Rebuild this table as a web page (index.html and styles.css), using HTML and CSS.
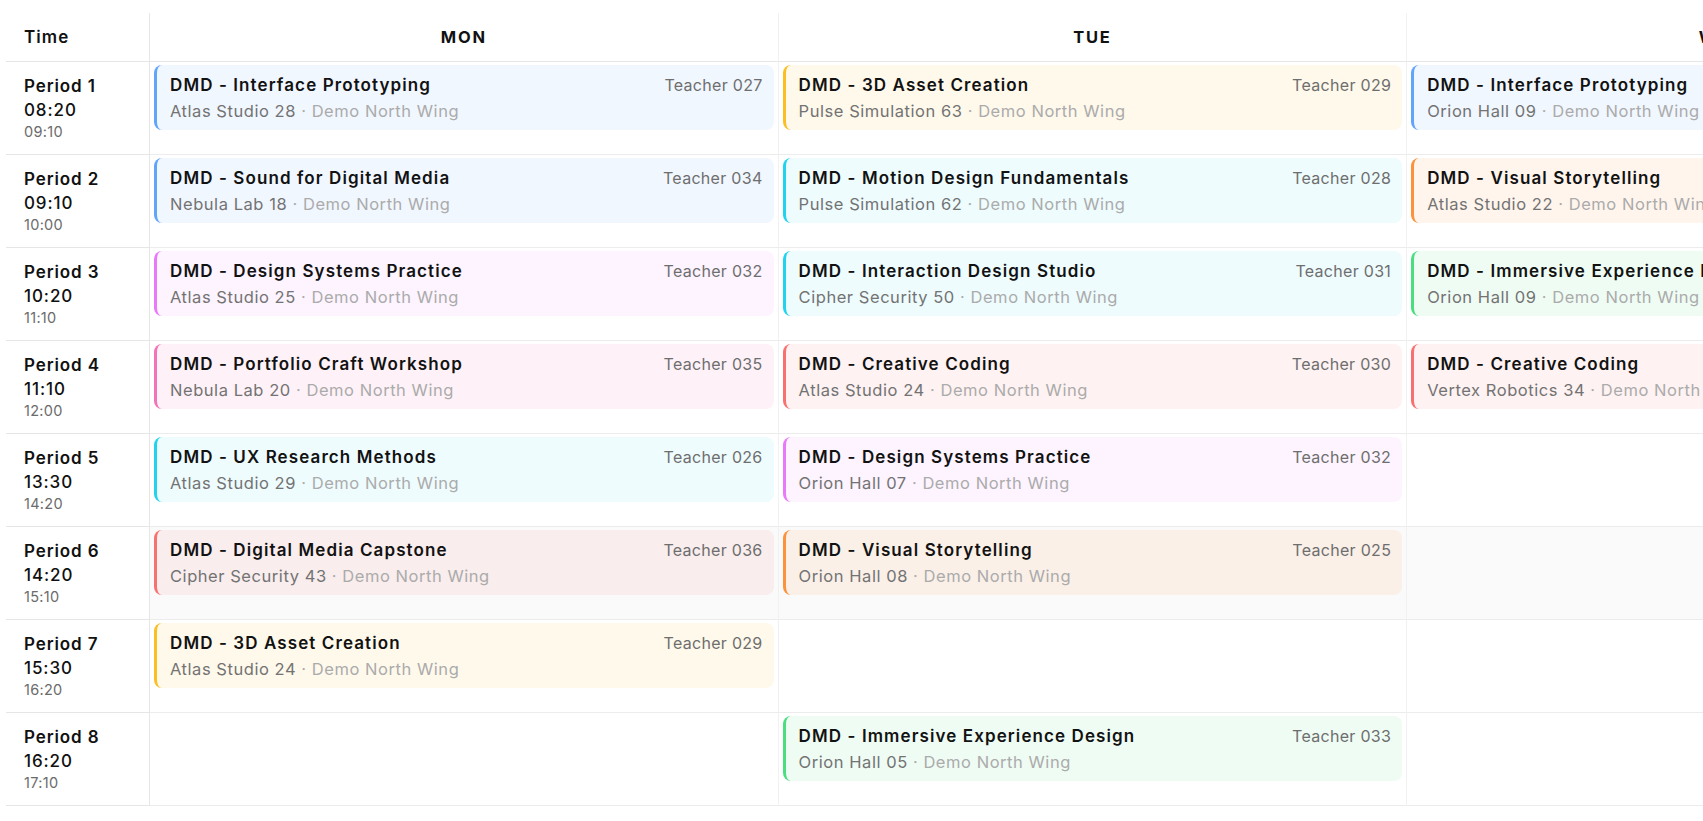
FILE: index.html
```html
<!DOCTYPE html>
<html lang="en">
<head>
<meta charset="utf-8">
<title>Timetable</title>
<link rel="stylesheet" href="styles.css">
</head>
<body>
<div class="page">
  <div class="timetable">
    <div class="head head-time">Time</div>
    <div class="head">MON</div>
    <div class="head">TUE</div>
    <div class="head">WED</div>
    <div class="head">THU</div>
    <div class="head">FRI</div>

    <!-- Period 1 -->
    <div class="time-cell"><div class="period">Period 1</div><div class="start">08:20</div><div class="end">09:10</div></div>
    <div class="slot"><div class="card blue"><div class="card-top"><span class="title">DMD - Interface Prototyping</span><span class="teacher">Teacher 027</span></div><div class="place"><span class="room">Atlas Studio 28</span><span class="wing"> · Demo North Wing</span></div></div></div>
    <div class="slot"><div class="card amber"><div class="card-top"><span class="title">DMD - 3D Asset Creation</span><span class="teacher">Teacher 029</span></div><div class="place"><span class="room">Pulse Simulation 63</span><span class="wing"> · Demo North Wing</span></div></div></div>
    <div class="slot"><div class="card blue"><div class="card-top"><span class="title">DMD - Interface Prototyping</span><span class="teacher">Teacher 027</span></div><div class="place"><span class="room">Orion Hall 09</span><span class="wing"> · Demo North Wing</span></div></div></div>
    <div class="slot"></div>
    <div class="slot"></div>

    <!-- Period 2 -->
    <div class="time-cell"><div class="period">Period 2</div><div class="start">09:10</div><div class="end">10:00</div></div>
    <div class="slot"><div class="card blue"><div class="card-top"><span class="title">DMD - Sound for Digital Media</span><span class="teacher">Teacher 034</span></div><div class="place"><span class="room">Nebula Lab 18</span><span class="wing"> · Demo North Wing</span></div></div></div>
    <div class="slot"><div class="card cyan"><div class="card-top"><span class="title">DMD - Motion Design Fundamentals</span><span class="teacher">Teacher 028</span></div><div class="place"><span class="room">Pulse Simulation 62</span><span class="wing"> · Demo North Wing</span></div></div></div>
    <div class="slot"><div class="card orange"><div class="card-top"><span class="title">DMD - Visual Storytelling</span><span class="teacher">Teacher 025</span></div><div class="place"><span class="room">Atlas Studio 22</span><span class="wing"> · Demo North Wing</span></div></div></div>
    <div class="slot"></div>
    <div class="slot"></div>

    <!-- Period 3 -->
    <div class="time-cell"><div class="period">Period 3</div><div class="start">10:20</div><div class="end">11:10</div></div>
    <div class="slot"><div class="card fuchsia"><div class="card-top"><span class="title">DMD - Design Systems Practice</span><span class="teacher">Teacher 032</span></div><div class="place"><span class="room">Atlas Studio 25</span><span class="wing"> · Demo North Wing</span></div></div></div>
    <div class="slot"><div class="card cyan"><div class="card-top"><span class="title">DMD - Interaction Design Studio</span><span class="teacher">Teacher 031</span></div><div class="place"><span class="room">Cipher Security 50</span><span class="wing"> · Demo North Wing</span></div></div></div>
    <div class="slot"><div class="card green"><div class="card-top"><span class="title">DMD - Immersive Experience Design</span><span class="teacher">Teacher 033</span></div><div class="place"><span class="room">Orion Hall 09</span><span class="wing"> · Demo North Wing</span></div></div></div>
    <div class="slot"></div>
    <div class="slot"></div>

    <!-- Period 4 -->
    <div class="time-cell"><div class="period">Period 4</div><div class="start">11:10</div><div class="end">12:00</div></div>
    <div class="slot"><div class="card pink"><div class="card-top"><span class="title">DMD - Portfolio Craft Workshop</span><span class="teacher">Teacher 035</span></div><div class="place"><span class="room">Nebula Lab 20</span><span class="wing"> · Demo North Wing</span></div></div></div>
    <div class="slot"><div class="card red"><div class="card-top"><span class="title">DMD - Creative Coding</span><span class="teacher">Teacher 030</span></div><div class="place"><span class="room">Atlas Studio 24</span><span class="wing"> · Demo North Wing</span></div></div></div>
    <div class="slot"><div class="card red"><div class="card-top"><span class="title">DMD - Creative Coding</span><span class="teacher">Teacher 030</span></div><div class="place"><span class="room">Vertex Robotics 34</span><span class="wing"> · Demo North Wing</span></div></div></div>
    <div class="slot"></div>
    <div class="slot"></div>

    <!-- Period 5 -->
    <div class="time-cell"><div class="period">Period 5</div><div class="start">13:30</div><div class="end">14:20</div></div>
    <div class="slot"><div class="card cyan"><div class="card-top"><span class="title">DMD - UX Research Methods</span><span class="teacher">Teacher 026</span></div><div class="place"><span class="room">Atlas Studio 29</span><span class="wing"> · Demo North Wing</span></div></div></div>
    <div class="slot"><div class="card fuchsia"><div class="card-top"><span class="title">DMD - Design Systems Practice</span><span class="teacher">Teacher 032</span></div><div class="place"><span class="room">Orion Hall 07</span><span class="wing"> · Demo North Wing</span></div></div></div>
    <div class="slot"></div>
    <div class="slot"></div>
    <div class="slot"></div>

    <!-- Period 6 (highlighted) -->
    <div class="time-cell"><div class="period">Period 6</div><div class="start">14:20</div><div class="end">15:10</div></div>
    <div class="slot hl"><div class="card red"><div class="card-top"><span class="title">DMD - Digital Media Capstone</span><span class="teacher">Teacher 036</span></div><div class="place"><span class="room">Cipher Security 43</span><span class="wing"> · Demo North Wing</span></div></div></div>
    <div class="slot hl"><div class="card orange"><div class="card-top"><span class="title">DMD - Visual Storytelling</span><span class="teacher">Teacher 025</span></div><div class="place"><span class="room">Orion Hall 08</span><span class="wing"> · Demo North Wing</span></div></div></div>
    <div class="slot hl"></div>
    <div class="slot hl"></div>
    <div class="slot hl"></div>

    <!-- Period 7 -->
    <div class="time-cell"><div class="period">Period 7</div><div class="start">15:30</div><div class="end">16:20</div></div>
    <div class="slot"><div class="card amber"><div class="card-top"><span class="title">DMD - 3D Asset Creation</span><span class="teacher">Teacher 029</span></div><div class="place"><span class="room">Atlas Studio 24</span><span class="wing"> · Demo North Wing</span></div></div></div>
    <div class="slot"></div>
    <div class="slot"></div>
    <div class="slot"></div>
    <div class="slot"></div>

    <!-- Period 8 -->
    <div class="time-cell"><div class="period">Period 8</div><div class="start">16:20</div><div class="end">17:10</div></div>
    <div class="slot"></div>
    <div class="slot"><div class="card green"><div class="card-top"><span class="title">DMD - Immersive Experience Design</span><span class="teacher">Teacher 033</span></div><div class="place"><span class="room">Orion Hall 05</span><span class="wing"> · Demo North Wing</span></div></div></div>
    <div class="slot"></div>
    <div class="slot"></div>
    <div class="slot"></div>
  </div>
</div>
</body>
</html>
```
FILE: styles.css
```css
html, body {
  margin: 0;
  padding: 0;
  background: #ffffff;
}
body {
  font-family: Inter, "Noto Sans", "Liberation Sans", sans-serif;
  color: #121212;
  overflow: hidden;
}
.page {
  padding: 13px 0 0 6px;
  width: max-content;
}
.timetable {
  display: grid;
  grid-template-columns: 144px repeat(5, 628.6px);
}
.head {
  height: 48px;
  border-bottom: 1px solid #e6e6e6;
  border-right: 1px solid #f1f1f1;
  display: flex;
  align-items: center;
  justify-content: center;
  font-size: 16.5px;
  font-weight: 700;
  letter-spacing: 1.8px;
  color: #111;
}
.head-time {
  justify-content: flex-start;
  padding-left: 18px;
  font-size: 17px;
  letter-spacing: 1.1px;
  border-right: 1px solid #e6e6e6;
  font-weight: 600;
}
.time-cell {
  padding: 12px 0 12px 18px;
  border-bottom: 1px solid #e6e6e6;
  border-right: 1px solid #e6e6e6;
}
.period, .start {
  font-size: 17px;
  line-height: 24px;
  font-weight: 600;
  letter-spacing: 0.9px;
  color: #111;
}
.start {
  font-weight: 500;
}
.end {
  font-size: 14.5px;
  line-height: 20px;
  color: #6b6b6b;
  letter-spacing: 0.3px;
}
.slot {
  padding: 3px 4px;
  border-bottom: 1px solid #ececec;
  border-right: 1px solid #f1f1f1;
}
.slot.hl {
  background: #fafafa;
}
.card {
  border-radius: 8px;
  border-left: 3px solid;
  padding: 9px 11px 9px 13px;
}
.card-top {
  display: flex;
  justify-content: space-between;
  align-items: baseline;
  gap: 12px;
}
.title {
  font-size: 17px;
  line-height: 22px;
  font-weight: 600;
  letter-spacing: 1.1px;
  color: #121212;
  white-space: nowrap;
}
.teacher {
  font-size: 16px;
  line-height: 22px;
  color: #6e6e6e;
  letter-spacing: 0.3px;
  white-space: nowrap;
}
.place {
  margin-top: 5px;
  font-size: 16.5px;
  line-height: 20px;
  letter-spacing: 0.55px;
  white-space: nowrap;
}
.room { color: #737373; }
.wing { color: #ababab; }

.blue    { border-left-color: #60a5fa; background: rgba(96, 165, 250, 0.09); }
.amber   { border-left-color: #fbbf24; background: rgba(251, 191, 36, 0.09); }
.cyan    { border-left-color: #22d3ee; background: rgba(34, 211, 238, 0.08); }
.fuchsia { border-left-color: #e879f9; background: rgba(232, 121, 249, 0.08); }
.pink    { border-left-color: #f472b6; background: rgba(244, 114, 182, 0.09); }
.red     { border-left-color: #f87171; background: rgba(248, 113, 113, 0.09); }
.orange  { border-left-color: #fb923c; background: rgba(251, 146, 60, 0.09); }
.green   { border-left-color: #4ade80; background: rgba(74, 222, 128, 0.09); }
```
